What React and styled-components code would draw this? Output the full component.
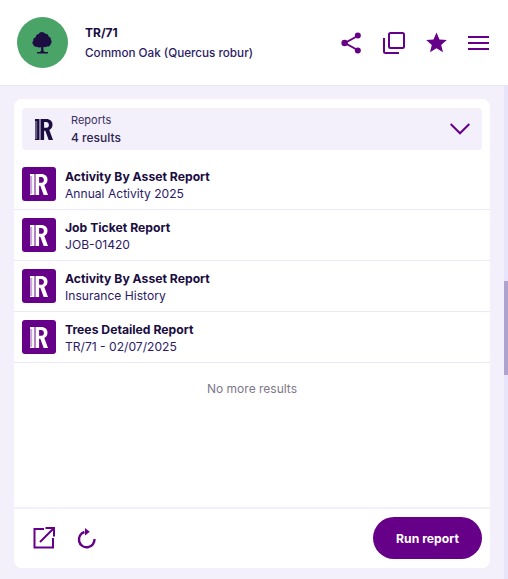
import styled, { createGlobalStyle } from "styled-components"

const GlobalStyle = createGlobalStyle`
  html, body {
    margin: 0;
    padding: 0;
    background: #f3f0fc;
    font-family: Inter, "Liberation Sans", sans-serif;
  }
`

const purple = "#660088"

const Page = styled.div`
  display: flex;
  flex-direction: column;
  width: 508px;
  height: 579px;
  overflow: hidden;
`

const Header = styled.header`
  display: flex;
  align-items: center;
  flex: 0 0 86px;
  box-sizing: border-box;
  padding: 0 19px 0 17px;
  background: #fff;
  border-bottom: 1px solid #e9e5f8;
`

const Avatar = styled.div`
  display: flex;
  align-items: center;
  justify-content: center;
  width: 51px;
  height: 51px;
  border-radius: 50%;
  background: #4aa468;
  margin-right: 17px;
`

const HeaderText = styled.div`
  display: flex;
  flex-direction: column;
  flex: 1;
  gap: 6px;
`

const AssetId = styled.div`
  font-size: 12px;
  line-height: 15px;
  font-weight: 700;
  color: #1a0d3f;
`

const AssetName = styled.div`
  font-size: 11.7px;
  line-height: 15px;
  font-weight: 500;
  color: #2c1a66;
`

const Actions = styled.div`
  display: flex;
  align-items: center;
  gap: 21px;
`

const Body = styled.div`
  display: flex;
  flex: 1;
  min-height: 0;
`

const Content = styled.main`
  display: flex;
  flex: 1;
  box-sizing: border-box;
  padding: 13px 14px 11px;
`

const ScrollTrack = styled.div`
  flex: 0 0 4px;
  padding-top: 195px;
  background: #e8e4fb;
`

const ScrollThumb = styled.div`
  height: 94px;
  background: #b0a2cf;
`

const Card = styled.section`
  display: flex;
  flex-direction: column;
  flex: 1;
  border-radius: 8px;
  background: #fff;
`

const ReportsBar = styled.div`
  display: flex;
  align-items: center;
  height: 42px;
  margin: 9px 8px 0;
  padding: 0 12px 0 13px;
  border-radius: 4px;
  background: #f3f0fc;
`

const BarLogo = styled.div`
  display: flex;
  width: 36px;
`

const BarText = styled.div`
  display: flex;
  flex-direction: column;
  flex: 1;
  gap: 3px;
`

const BarLabel = styled.div`
  font-size: 11px;
  line-height: 14px;
  color: #3b2f5c;
`

const BarCount = styled.div`
  font-size: 12px;
  line-height: 15px;
  font-weight: 500;
  color: #2e2450;
`

const List = styled.ul`
  display: flex;
  flex-direction: column;
  margin: 9px 0 0;
  padding: 0;
  list-style: none;
`

const Row = styled.li`
  display: flex;
  align-items: center;
  height: 51px;
  box-sizing: border-box;
  padding: 0 8px;
  border-bottom: 1px solid #ece8fa;
`

const Tile = styled.div`
  display: flex;
  align-items: center;
  justify-content: center;
  width: 34px;
  height: 34px;
  border-radius: 3px;
  background: ${purple};
  margin-right: 9px;
`

const RowText = styled.div`
  display: flex;
  flex-direction: column;
  gap: 2px;
  padding-top: 2px;
`

const RowTitle = styled.div`
  font-size: 12.2px;
  line-height: 15px;
  font-weight: 700;
  color: #1a0d3f;
`

const RowSub = styled.div`
  font-size: 12.1px;
  line-height: 15px;
  color: #2c1a66;
`

const NoMore = styled.div`
  margin-top: 18px;
  text-align: center;
  font-size: 12px;
  line-height: 15px;
  color: #7d7889;
`

const Footer = styled.footer`
  display: flex;
  align-items: center;
  margin-top: auto;
  height: 61px;
  box-sizing: border-box;
  padding: 0 8px 1px 19px;
  border-top: 2px solid #f3f0fc;
`

const FooterIcons = styled.div`
  display: flex;
  align-items: center;
  flex: 1;
  gap: 22px;
`

const RunButton = styled.button`
  width: 109px;
  height: 42px;
  border: 0;
  border-radius: 21px;
  background: ${purple};
  color: #fff;
  font-family: inherit;
  font-size: 12.2px;
  font-weight: 700;
`

const Icon = styled.svg`
  display: block;
  flex: none;
  color: ${purple};
`

const ShareIcon = () => (
  <Icon width="21" height="22" viewBox="0 0 21 22">
    <path d="M16.5 4 4 11l12.5 7" fill="none" stroke="currentColor" strokeWidth="2" />
    <circle cx="16.8" cy="3.6" r="3" fill="currentColor" />
    <circle cx="3.6" cy="11" r="3.2" fill="currentColor" />
    <circle cx="16.8" cy="18.4" r="3" fill="currentColor" />
  </Icon>
)

const CopyIcon = () => (
  <Icon width="22" height="22" viewBox="0 0 22 22" fill="none" stroke="currentColor" strokeWidth="2">
    <rect x="6" y="1" width="15" height="15" rx="1.5" />
    <path d="M1 6v13.5A1.5 1.5 0 0 0 2.500 21H16" />
  </Icon>
)

const StarIcon = () => (
  <Icon width="21" height="21" viewBox="0 0 21 21">
    <path d="m10.500 0.500 3 7.100 7.300 0.500-5.600 4.800 1.800 7.400-6.500-4-6.500 4 1.800-7.400L0.200 8.100l7.300-0.500z" fill="currentColor" />
  </Icon>
)

const MenuIcon = () => (
  <Icon width="21" height="16" viewBox="0 0 21 16" fill="none" stroke="currentColor" strokeWidth="2">
    <path d="M0 2h21M0 8h21M0 14h21" />
  </Icon>
)

const ChevronIcon = () => (
  <Icon width="20" height="12" viewBox="0 0 20 12" fill="none" stroke="currentColor" strokeWidth="2">
    <path d="m0.700 1 9.300 9.300L19.300 1" />
  </Icon>
)

const OpenIcon = () => (
  <Icon width="22" height="22" viewBox="0 0 22 22" fill="none" stroke="currentColor" strokeWidth="2">
    <path d="M11 2H1.500v18.500H20V11" />
    <path d="M7 15 20 2M12.500 1H21v8.500" />
  </Icon>
)

const RefreshIcon = () => (
  <Icon width="19" height="22" viewBox="0 0 19 22">
    <path d="M7.500 5a7.800 7.800 0 1 0 10 7" fill="none" stroke="currentColor" strokeWidth="2.400" />
    <path d="M8 1 12.800 4.800 8 8.600z" fill="currentColor" />
  </Icon>
)

const TreeIcon = () => (
  <Icon width="21" height="22" viewBox="0 0 22 24">
    <path
      d="M10 0c2 0 3.200.8 4 2 2-.2 3.500 1 3.600 3 1.800.6 2.900 2 2.600 3.800 1.200 1.300 1 3.500-.4 4.500-.4 1.900-2.200 2.900-4 2.400-1 .9-2.500 1.100-3.800.5V20c0 .8.500 1.300 1.500 1.800h3.500V23.500H5v-1.700h3c1-.5 1.500-1 1.500-1.800v-3.700c-1.500 1-3.400.9-4.500-.2-1.800.4-3.500-.6-3.900-2.300C-.3 13 -.4 10.800 1 9.500.6 7.700 1.700 6 3.600 5.600 3.700 3.400 5.200 2 7 2.100 7.700.8 8.700 0 10 0z"
      fill="#1c0d42"
    />
  </Icon>
)

// ruler bar with the R next to it
const ReportLogo = ({ color, tick }) => (
  <svg width="18" height="21" viewBox="0 0 18 21" style={{ display: "block", flex: "none" }}>
    <rect x="0" y="0" width="4.500" height="21" fill={color} />
    <path
      d="M0 3h2.200M0 5h2.200M0 7h2.200M0 9h2.200M0 11h2.200M0 13h2.200M0 15h2.200M0 17h2.200M0 19h2.200"
      stroke={tick}
      strokeWidth="0.700"
    />
    <path
      d="M5.500 0h5.700c4 0 6.300 2.200 6.300 5.800 0 2.500-1.200 4.300-3.200 5.100L18 21h-4.300l-3.400-9.300H9.100V21H5.500z M9.100 3v5.800h1.900c1.800 0 2.900-1.100 2.900-2.900C13.900 4 12.800 3 11 3z"
      fill={color}
      fillRule="evenodd"
    />
  </svg>
)

const reports = [
  { title: "Activity By Asset Report", sub: "Annual Activity 2025" },
  { title: "Job Ticket Report", sub: "JOB-01420" },
  { title: "Activity By Asset Report", sub: "Insurance History" },
  { title: "Trees Detailed Report", sub: "TR/71 - 02/07/2025" },
]

export default function App() {
  return (
    <>
      <GlobalStyle />
      <Page>
        <Header>
          <Avatar>
            <TreeIcon />
          </Avatar>
          <HeaderText>
            <AssetId>TR/71</AssetId>
            <AssetName>Common Oak (Quercus robur)</AssetName>
          </HeaderText>
          <Actions>
            <ShareIcon />
            <CopyIcon />
            <StarIcon />
            <MenuIcon />
          </Actions>
        </Header>
        <Body>
          <Content>
            <Card>
              <ReportsBar>
                <BarLogo>
                  <ReportLogo color="#1c0d42" tick="#f3f0fc" />
                </BarLogo>
                <BarText>
                  <BarLabel>Reports</BarLabel>
                  <BarCount>4 results</BarCount>
                </BarText>
                <ChevronIcon />
              </ReportsBar>
              <List>
                {reports.map((report, index) => (
                  <Row key={index}>
                    <Tile>
                      <ReportLogo color="#fff" tick={purple} />
                    </Tile>
                    <RowText>
                      <RowTitle>{report.title}</RowTitle>
                      <RowSub>{report.sub}</RowSub>
                    </RowText>
                  </Row>
                ))}
              </List>
              <NoMore>No more results</NoMore>
              <Footer>
                <FooterIcons>
                  <OpenIcon />
                  <RefreshIcon />
                </FooterIcons>
                <RunButton>Run report</RunButton>
              </Footer>
            </Card>
          </Content>
          <ScrollTrack>
            <ScrollThumb />
          </ScrollTrack>
        </Body>
      </Page>
    </>
  )
}
